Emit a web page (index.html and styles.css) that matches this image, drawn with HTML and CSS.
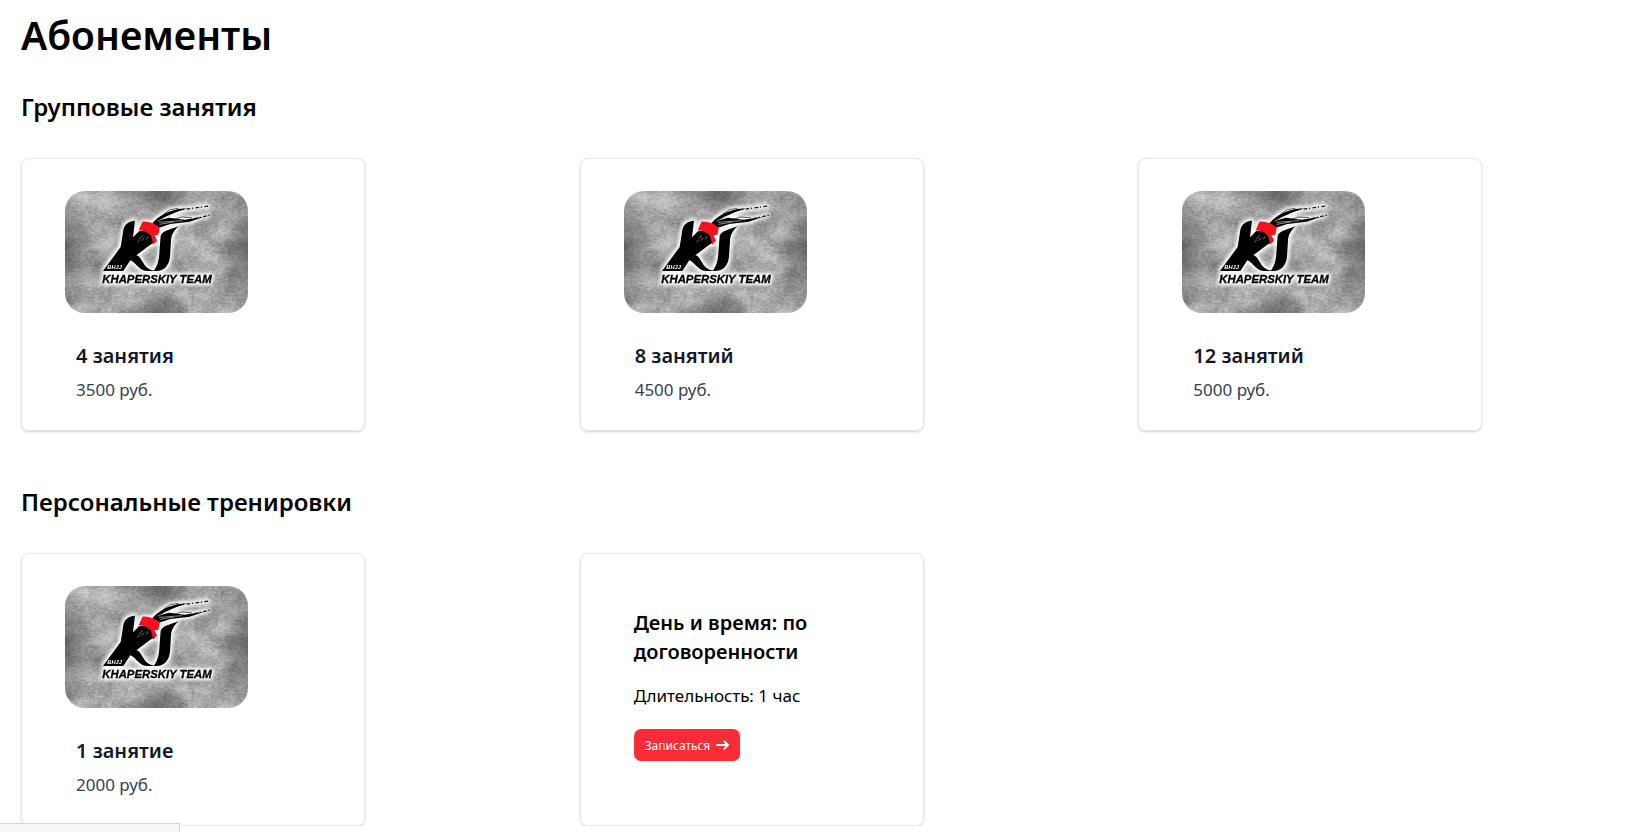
FILE: index.html
```html
<!DOCTYPE html>
<html lang="ru">
<head>
<meta charset="utf-8">
<title>Абонементы</title>
<link rel="stylesheet" href="styles.css">
</head>
<body>
<svg class="defs" aria-hidden="true">
  <defs>
    <filter id="concrete" x="0" y="0" width="100%" height="100%" color-interpolation-filters="sRGB">
      <feTurbulence type="fractalNoise" baseFrequency="0.04 0.05" numOctaves="3" seed="8" result="large"/>
      <feColorMatrix in="large" values="0.4 0.1 0 0 0.41  0.4 0.1 0 0 0.41  0.4 0.1 0 0 0.41  0 0 0 0 1" result="base"/>
      <feTurbulence type="fractalNoise" baseFrequency="0.3 0.5" numOctaves="3" seed="3"/>
      <feColorMatrix values="0.8 0 0 0 0.1  0.8 0 0 0 0.1  0.8 0 0 0 0.1  0 0 0 0 1" result="grain"/>
      <feComposite in="base" in2="grain" operator="arithmetic" k1="0" k2="0.9" k3="0.3" k4="-0.09"/>
    </filter>
    <filter id="glow" x="-20%" y="-20%" width="140%" height="140%" color-interpolation-filters="sRGB">
      <feMorphology in="SourceAlpha" operator="dilate" radius="2"/>
      <feGaussianBlur stdDeviation="6" result="b"/>
      <feFlood flood-color="#fff"/>
      <feComposite in2="b" operator="in" result="g"/>
      <feMerge><feMergeNode in="g"/><feMergeNode in="g"/><feMergeNode in="SourceGraphic"/></feMerge>
    </filter>
    <radialGradient id="stain">
      <stop offset="0" stop-color="#222" stop-opacity=".5"/>
      <stop offset="1" stop-color="#222" stop-opacity="0"/>
    </radialGradient>
    <symbol id="banner" viewBox="0 0 183 122">
      <rect width="183" height="122" filter="url(#concrete)"/>
      <ellipse cx="92" cy="0" rx="32" ry="24" fill="url(#stain)"/>
      <ellipse cx="92" cy="122" rx="32" ry="24" fill="url(#stain)"/>
      <ellipse cx="0" cy="61" rx="30" ry="60" fill="url(#stain)"/>
      <ellipse cx="183" cy="61" rx="30" ry="60" fill="url(#stain)"/>
      <path d="M20 61H34M150 61H166M101 4l-2 7M79 3l4 8M101 118l-2-8M79 119l3-8" stroke="#444" stroke-opacity=".4" stroke-width=".7" fill="none"/>
      <g transform="translate(30 9) scale(.33333)" filter="url(#glow)">
        <path d="M120 62C99 64 88 74 85 90L77 141L24 213H85L108 178L166 134L184 124L160 90L132 94L114 112Z"/>
        <path d="M97 178C112 164 124 161 134 172C146 186 149 210 184 213H156C128 212 125 184 97 178Z"/>
        <path d="M197 107C202 92 228 88 251 78C236 92 229 105 228 122L225 170C222 196 208 213 184 213H176C188 197 192 180 193 160Z"/>
        <path d="M172 70C188 50 212 36 250 27L276 25L243 37L210 51L196 60L222 53L270 59L328 50L284 65L226 72L192 83Z"/>
        <path d="M188 63L226 47M192 67L262 62M194 73L236 66" stroke="#ccc" stroke-width="2" fill="none"/>
        <path d="M248 31L340 18M272 62L346 45" stroke="#111" stroke-width="4" stroke-dasharray="11 5 4 7" fill="none"/>
        <path d="M206 42L226 29L250 25M228 61L260 51L290 53" stroke="#111" stroke-width="2" fill="none"/>
        <path d="M142 65C160 63 178 69 194 83L190 104L178 106L186 121L175 134L168 107C158 97 146 92 131 91Z" fill="#f5121d"/>
        <path d="M133 118l10-12M140 122l8-9M127 127l7-7M154 118l5-9" stroke="#aaa" stroke-width="2"/>
        <text class="logo-sub" x="37" y="207">BHJJ</text>
        <text class="logo-name" x="22" y="248">KHAPERSKIY TEAM</text>
      </g>
    </symbol>
  </defs>
</svg>
<main class="page">
  <h1 class="title">Абонементы</h1>
  <section>
    <h2 class="heading">Групповые занятия</h2>
    <div class="grid">
      <article class="card">
        <svg class="banner" role="img" aria-label="Khaperskiy Team"><use href="#banner"/></svg>
        <div class="info"><h3 class="name">4 занятия</h3><p class="price">3500 руб.</p></div>
      </article>
      <article class="card">
        <svg class="banner" role="img" aria-label="Khaperskiy Team"><use href="#banner"/></svg>
        <div class="info"><h3 class="name">8 занятий</h3><p class="price">4500 руб.</p></div>
      </article>
      <article class="card">
        <svg class="banner" role="img" aria-label="Khaperskiy Team"><use href="#banner"/></svg>
        <div class="info"><h3 class="name">12 занятий</h3><p class="price">5000 руб.</p></div>
      </article>
    </div>
  </section>
  <section>
    <h2 class="heading">Персональные тренировки</h2>
    <div class="grid">
      <article class="card">
        <svg class="banner" role="img" aria-label="Khaperskiy Team"><use href="#banner"/></svg>
        <div class="info"><h3 class="name">1 занятие</h3><p class="price">2000 руб.</p></div>
      </article>
      <article class="card card-booking">
        <h3 class="booking-title">День и время: по договоренности</h3>
        <p class="duration">Длительность: 1 час</p>
        <a class="button" href="#">Записаться
          <svg class="arrow" viewBox="0 0 14 10" aria-hidden="true"><path d="M1 5h12M9 1l4 4-4 4"/></svg>
        </a>
      </article>
    </div>
  </section>
</main>
<div class="status"></div>
</body>
</html>
```
FILE: styles.css
```css
* { box-sizing: border-box; margin: 0; }
body { background: #fff; color: #000; font-family: "Segoe UI", "Noto Sans", sans-serif; }
.defs { position: absolute; width: 0; height: 0; }
.page { padding: 10px 22px 0 21px; }
.title { font-size: 39px; line-height: 50px; font-weight: 600; margin-bottom: 26px; }
.heading { font-size: 24px; line-height: 41px; font-weight: 600; margin-bottom: 31px; }
.grid { display: grid; grid-template-columns: repeat(3, 1fr); gap: 90px; margin-bottom: 50px; }
section:last-child .grid { margin-bottom: 0; }
.card { max-width: 344px; padding: 32px 43px 25px; border: 1px solid #e5e7eb; border-radius: 8px; box-shadow: 0 1px 3px rgba(0,0,0,.1), 0 1px 2px rgba(0,0,0,.1); }
.banner { display: block; width: 183px; height: 122px; border-radius: 20px; }
.info { padding: 28px 11px 0; }
.name { font-size: 20px; line-height: 30px; font-weight: 600; color: #101828; margin-bottom: 4px; }
.price { font-size: 17px; line-height: 30px; color: #364153; }
.card-booking { display: flex; flex-direction: column; align-items: flex-start; padding: 54px 53px 24px; }
.booking-title { font-size: 20px; line-height: 29px; font-weight: 600; margin-bottom: 16px; }
.duration { font-size: 17px; line-height: 28px; margin-bottom: 19px; }
.button { display: inline-flex; align-items: center; gap: 6px; height: 32px; padding: 0 11px; border-radius: 7px; background: #fb2c36; color: #fff; font-size: 12px; text-decoration: none; }
.arrow { width: 13px; height: 10px; fill: none; stroke: #fff; stroke-width: 2; stroke-linecap: round; stroke-linejoin: round; }
.logo-sub { font: italic bold 17px "Liberation Sans", sans-serif; fill: #fff; }
.logo-name { font: italic bold 34px "Liberation Sans", sans-serif; stroke: #000; stroke-width: 1px; }
.status { position: fixed; left: 0; bottom: 0; width: 180px; height: 9px; background: #f8f8f8; border: solid #d4d4d4; border-width: 1px 1px 0 0; }
```
